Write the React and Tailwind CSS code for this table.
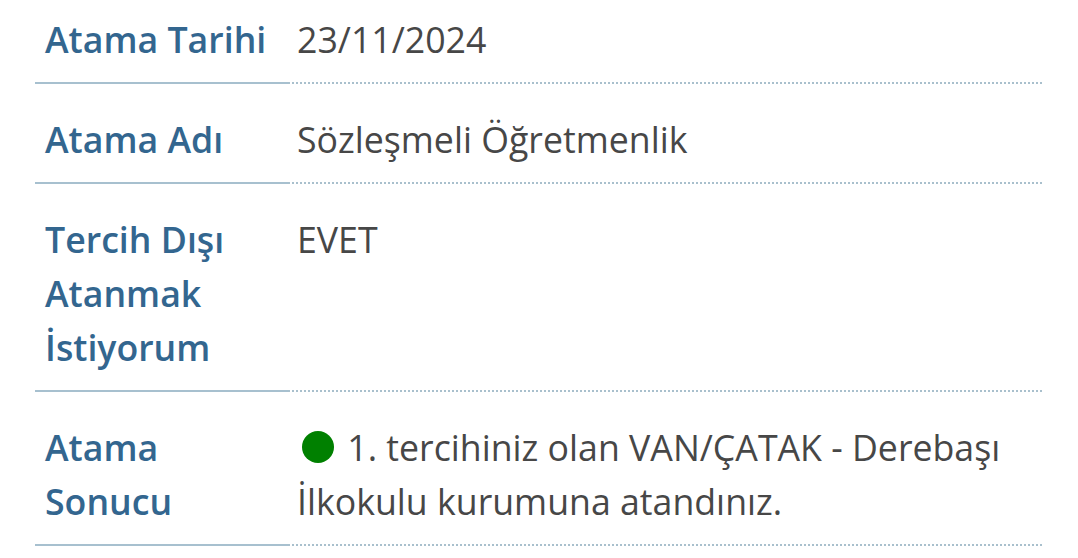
const rows = [
  { label: "Atama Tarihi", value: "23/11/2024" },
  { label: "Atama Adı", value: "Sözleşmeli Öğretmenlik" },
  { label: "Tercih Dışı Atanmak İstiyorum", value: "EVET" },
  {
    label: "Atama Sonucu",
    value: (
      <>
        <span className="inline-block w-8 h-8 rounded-full bg-[#008000] ml-[5px] mr-[4px] align-[-2px]" />{" "}
        1. tercihiniz olan VAN/ÇATAK - Derebaşı İlkokulu kurumuna atandınız.
      </>
    ),
  },
];

export default function App() {
  return (
    <div
      className="w-[1078px] h-[558px] bg-white overflow-hidden"
      style={{ fontFamily: '"Open Sans", "Noto Sans", sans-serif' }}
    >
      <div className="ml-[35px] w-[1007px] mt-[-16px]">
        {rows.map((row, i) => (
          <div key={i} className="flex text-[35.7px] leading-[54px]">
            <div className="w-[253px] shrink-0 pl-[10px] pr-[6px] pt-[28px] pb-[16px] border-b-2 border-[#a7c0cf] font-semibold text-[#33668f]">
              {row.label}
            </div>
            <div className="flex-1 pl-[9px] pr-[4px] pt-[28px] pb-[16px] border-b-2 border-dotted border-[#a9c0cd] text-[#474747]">
              {row.value}
            </div>
          </div>
        ))}
      </div>
    </div>
  );
}
